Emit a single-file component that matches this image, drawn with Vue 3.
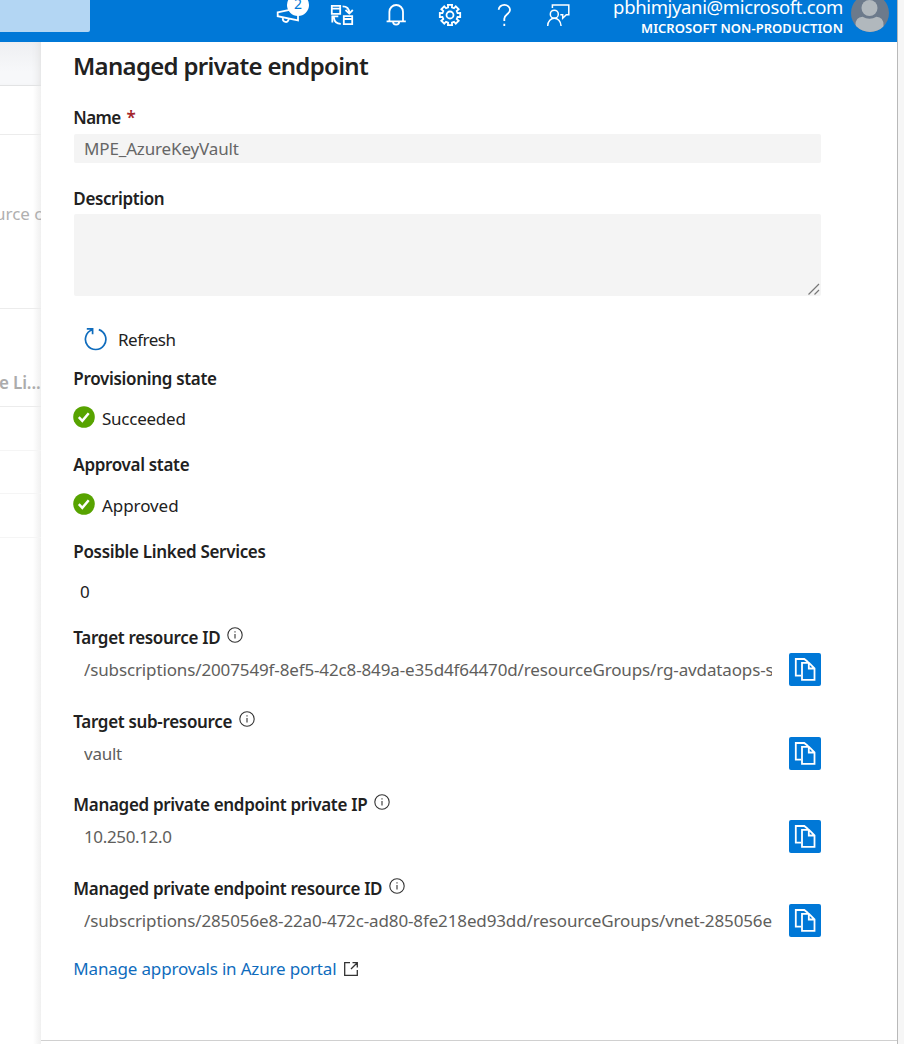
<script setup>
const details = [
  { label: 'Target resource ID', value: '/subscriptions/2007549f-8ef5-42c8-849a-e35d4f64470d/resourceGroups/rg-avdataops-synapse', size: 'long' },
  { label: 'Target sub-resource', value: 'vault', size: 'short' },
  { label: 'Managed private endpoint private IP', value: '10.250.12.0', size: 'digits' },
  { label: 'Managed private endpoint resource ID', value: '/subscriptions/285056e8-22a0-472c-ad80-8fe218ed93dd/resourceGroups/vnet-285056e', size: 'long' },
]

// Outline of an eight-toothed gear centred in a 24px box
const gearPoints = []
for (let i = 0; i < 8; i++) {
  const mid = (i * Math.PI) / 4
  for (const [offset, radius] of [[-0.25, 7.8], [-0.2, 10.4], [0.2, 10.4], [0.25, 7.8]]) {
    gearPoints.push(
      (12 + radius * Math.cos(mid + offset)).toFixed(2) + ',' + (12 + radius * Math.sin(mid + offset)).toFixed(2)
    )
  }
}
const gear = gearPoints.join(' ')
</script>

<template>
  <div class="window">
    <div class="app">
      <header class="topbar">
        <div class="search"></div>
        <nav class="tools">
          <span class="tool">
            <svg viewBox="0 0 24 24"><path d="M1.7 9.3 22 5v12.3L1.7 13.2zM6.6 14.3c0 6 5.8 6 6.2 1.3" /></svg>
            <span class="badge">2</span>
          </span>
          <span class="tool">
            <svg viewBox="0 0 24 24">
              <path d="M1.8 2.8h8.4v8H1.8zM1.8 5.6h8.4M13.8 13.2h8.4v8h-8.4zM13.8 16h8.4" />
              <path d="M12.6 3.3c4 0 6.5 2 6.7 6.5M15.5 7l3.8 3.6L22.8 7M10.8 20.8c-4 0-6.500-2-7-6.700M2.300 19.500V13.300h6" />
            </svg>
          </span>
          <span class="tool">
            <svg viewBox="0 0 24 24"><path d="M5.400 18.300V8.800a6.800 6.800 0 0 1 13.600 0v9.500M2.600 18.300h19.200M9 18.500a3.100 3.100 0 0 0 6.200 0" /></svg>
          </span>
          <span class="tool">
            <svg viewBox="0 0 24 24"><polygon :points="gear" /><circle cx="12" cy="12" r="3.500" /></svg>
          </span>
          <span class="tool">
            <svg viewBox="0 0 24 24"><path d="M6.700 6.800a5.600 5 0 0 1 11.300.1c0 4.200-5.700 4.600-5.700 8.800v2.200M12.300 20.700v2.200" /></svg>
          </span>
          <span class="tool">
            <svg class="feedback" viewBox="0 0 24 24">
              <path d="M6.400 5V1.900h16.400v9.900h-2.500l-3.600 3.400v-3.400h-2.400" />
              <circle cx="8.300" cy="11.200" r="4" />
              <path d="M1.700 23c.2-10.300 13-10.300 13.400 0" />
            </svg>
          </span>
        </nav>
        <div class="account">
          <div class="email">pbhimjyani@microsoft.com</div>
          <div class="tenant">MICROSOFT NON-PRODUCTION</div>
        </div>
        <svg class="avatar" viewBox="0 0 38 38">
          <defs><clipPath id="face"><circle cx="19" cy="19" r="19" /></clipPath></defs>
          <g clip-path="url(#face)">
            <rect width="38" height="38" fill="#6c7a8b" />
            <circle cx="18.500" cy="14" r="8" fill="#b1b8bd" />
            <path d="M4.500 31q0-8 7-8.300 7 4 14 0 7 .3 7 8.300v9h-28z" fill="#b1b8bd" />
          </g>
        </svg>
      </header>

      <div class="body">
        <aside class="backdrop">
          <div class="strip"></div>
          <div class="line l1"></div>
          <div class="line l2"><span class="faded">urce c</span></div>
          <div class="line l3"><span class="faded strong">e Li...</span></div>
          <div class="line l4"></div>
          <div class="line l5"></div>
          <div class="line l6"></div>
        </aside>

        <main class="panel">
          <h1>Managed private endpoint</h1>

          <div class="label name">Name<span class="star">*</span></div>
          <div class="input">MPE_AzureKeyVault</div>

          <div class="label description">Description</div>
          <div class="area">
            <svg viewBox="0 0 14 14"><path d="M1.500 12.500 12 2M7.500 12.500l4.500-4.500" /></svg>
          </div>

          <div class="refresh">
            <svg viewBox="0 0 24 24"><path d="M14.800 2.600A10.200 10.200 0 1 1 8.200 2.700M2.800 1.800h5.800v5.500" /></svg>
            <span>Refresh</span>
          </div>

          <div class="label provisioning">Provisioning state</div>
          <div class="status">
            <svg viewBox="0 0 22 22"><circle cx="11" cy="11" r="10.800" /><path d="m5.800 11.200 3.500 3.600 6.400-7.500" /></svg>
            <span class="succeeded">Succeeded</span>
          </div>

          <div class="label approval">Approval state</div>
          <div class="status second">
            <svg viewBox="0 0 22 22"><circle cx="11" cy="11" r="10.800" /><path d="m5.800 11.200 3.500 3.600 6.400-7.500" /></svg>
            <span class="approved">Approved</span>
          </div>

          <div class="label linked">Possible Linked Services</div>
          <div class="count">0</div>

          <section class="details">
            <div v-for="item in details" :key="item.label" class="detail">
              <div class="label">
                {{ item.label }}
                <svg class="info" viewBox="0 0 16 16"><circle cx="8" cy="8" r="7.200" /><path d="M8 7v4.500M8 4.300v1.300" /></svg>
              </div>
              <div class="row">
                <div class="value" :class="item.size">{{ item.value }}</div>
                <button class="copy" type="button" aria-label="Copy">
                  <svg viewBox="0 0 32 33">
                    <path d="M12 22.600H6.800V6h8.500l4 3.200M13 9.800h7l5.500 5.500v11.500H13zM19.800 9.800v5.700h5.700" />
                  </svg>
                </button>
              </div>
            </div>
          </section>

          <div class="manage">
            <a>Manage approvals in Azure portal</a>
            <svg viewBox="0 0 14 14"><path d="M6 .7H.7v12.600h12.600V8M8.500.7h4.800V5.500M13.300.7 7 7" /></svg>
          </div>
        </main>
      </div>
    </div>
    <div class="gutter"></div>
  </div>
</template>

<style>
body { margin: 0; overflow: hidden; }
</style>

<style scoped>
.window { display: flex; width: 904px; height: 1044px; overflow: hidden; background: #fff; color: #212121; font: 17px/23px "Noto Sans", "Open Sans", sans-serif; }
.app { display: flex; flex-direction: column; width: 897px; height: 1044px; }
.gutter { box-sizing: border-box; width: 7px; background: #f6f6f6; border-left: 1px solid #b9b9b9; }
svg { display: block; flex: none; fill: none; }

.topbar { display: flex; height: 42px; flex: none; background: #0078d7; color: #fff; }
.search { width: 90px; height: 32px; background: #b3d6f3; border-radius: 0 0 2px 0; }
.tools { display: flex; gap: 30px; margin: 3px 0 0 186px; }
.tool { position: relative; width: 24px; height: 24px; }
.tool svg { width: 24px; height: 24px; stroke: #fff; stroke-width: 1.8; }
.tool .feedback { stroke-width: 1.5; }
.badge { position: absolute; left: 11px; top: -9px; width: 22px; height: 22px; border-radius: 50%; background: #fff; color: #0078d7; font-size: 14px; line-height: 19px; text-align: center; }
.account { display: flex; flex-direction: column; align-items: flex-end; width: 270px; margin: -6px 0 0 auto; white-space: nowrap; }
.email { font-size: 18.5px; line-height: 25px; letter-spacing: -0.36px; }
.tenant { font-size: 13px; line-height: 18px; font-weight: 600; letter-spacing: 0.05px; }
.avatar { width: 38px; height: 38px; margin: -6px 8px 0 8px; }

.body { display: flex; flex: 1; min-height: 0; }
.backdrop { width: 41px; overflow: hidden; flex: none; background: linear-gradient(90deg, #fff 33px, #f0f0f0); }
.strip { height: 43px; background: linear-gradient(#eeeff2, #f7f8fa 70%); border-bottom: 1px solid #e2e3e4; box-shadow: inset -7px 0 8px -6px #ddd; }
.line { box-sizing: border-box; border-bottom: 1px solid #ececec; }
.l1 { height: 49px; }
.l2 { height: 174px; padding-top: 67px; }
.l3 { height: 98px; padding-top: 62px; }
.l4 { height: 44px; border-color: #f5f5f5; }
.l5 { height: 43px; border-color: #f5f5f5; }
.l6 { height: 44px; border-color: #f5f5f5; }
.faded { display: block; margin-left: -5px; white-space: nowrap; color: #b0b0b0; }
.faded.strong { margin-left: -1px; font-weight: 600; letter-spacing: -0.15px; color: #acacac; }

.panel { box-sizing: border-box; width: 856px; height: 999px; padding: 7px 76px 0 33px; background: #fff; border-bottom: 1px solid #d0d0d0; }
h1 { margin: 0 0 0 -1px; font-size: 24px; line-height: 33px; font-weight: 600; letter-spacing: -0.69px; }
.label { display: flex; margin-left: -0.7px; font-weight: 600; letter-spacing: -0.32px; white-space: nowrap; }
.name { margin-top: 24px; letter-spacing: -0.6px; }
.star { margin-left: 6px; color: #a4262c; font-weight: 600; }
.input { box-sizing: border-box; height: 29px; margin-top: 5px; padding: 3px 10px; background: #f4f4f4; border-radius: 2px; color: #666; letter-spacing: -0.14px; }
.description { margin-top: 24px; letter-spacing: -0.38px; }
.area { display: flex; justify-content: flex-end; align-items: flex-end; height: 82px; margin-top: 4px; background: #f4f4f4; border-radius: 2px; }
.area svg { width: 14px; height: 14px; stroke: #777; stroke-width: 1.2; }
.refresh { display: flex; margin: 32px 0 0 10px; letter-spacing: -0.49px; }
.refresh svg { width: 24px; height: 24px; margin: -1px 10px 0 0; stroke: #0f6cbd; stroke-width: 1.7; }
.provisioning { margin-top: 16px; }
.status { display: flex; margin-top: 17px; letter-spacing: -0.25px; }
.status svg { width: 22px; height: 22px; margin: -1px 7px 0 -1px; }
.status circle { fill: #57a300; }
.status path { stroke: #fff; stroke-width: 2.5; }
.status .approved { letter-spacing: -0.07px; }
.approval { margin-top: 23px; }
.second { margin-top: 18px; }
.linked { margin-top: 23px; }
.count { margin: 17px 0 0 6px; }
.details { margin-top: 23px; }
.detail { height: 83.600px; }
.info { width: 16px; height: 16px; margin: 1px 0 0 7px; stroke: #333; stroke-width: 1.1; }
.row { display: flex; justify-content: space-between; height: 33px; margin-top: 4px; }
.value { width: 688px; margin: 5px 0 0 10px; overflow: hidden; white-space: nowrap; color: #605e5c; }
.long { letter-spacing: -0.13px; }
.short { letter-spacing: -0.24px; }
.digits { letter-spacing: -0.36px; }
.copy { width: 32px; height: 33px; flex: none; margin: 0; padding: 0; border: 0; border-radius: 2px; background: #0078d7; }
.copy svg { width: 32px; height: 33px; stroke: #fff; stroke-width: 1.8; }
.manage { display: flex; margin-top: -3px; }
.manage a { margin-left: -0.7px; color: #0f6cbd; letter-spacing: -0.18px; }
.manage svg { width: 14px; height: 14px; margin: 5px 0 0 7.500px; stroke: #333; stroke-width: 1.3; }
</style>
